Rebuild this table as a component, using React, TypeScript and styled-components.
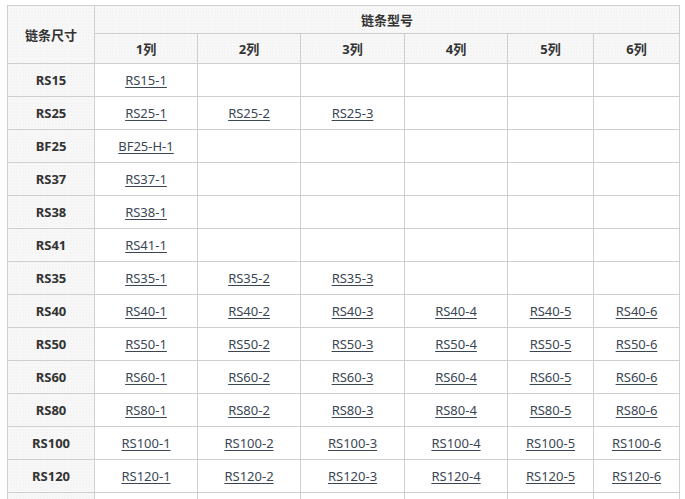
import React from "react";
import styled, { createGlobalStyle } from "styled-components";

const Global = createGlobalStyle`
  html, body { margin: 0; padding: 0; background: #fff; }
  body { font-family: "Noto Sans", "Noto Sans CJK SC", sans-serif; color: #333; }
`;

const Page = styled.div`
  padding: 5px 0 0 7px;
  height: 499px;
  overflow: hidden;
  box-sizing: border-box;
`;

const Table = styled.table`
  border-collapse: collapse;
  table-layout: fixed;
  width: 673px;
  font-size: 13px;
`;

const Col = styled.col<{ $w: number }>`
  width: ${(p) => p.$w}px;
`;

const Th = styled.th<{ $h?: number }>`
  border: 1px solid #cfcfcf;
  height: ${(p) => p.$h ?? 32}px;
  padding: 0;
  box-sizing: border-box;
  font-weight: bold;
  font-size: 13px;
  color: #333;
  text-align: center;
  vertical-align: middle;
  background-color: #e6e6e6;
  background-image: linear-gradient(90deg, #f8f8f8 2px, transparent 2px),
    linear-gradient(#f8f8f8 2px, #e6e6e6 2px);
  background-size: 3px 3px;
`;

const Td = styled.td`
  border: 1px solid #cfcfcf;
  height: 33px;
  padding: 0;
  box-sizing: border-box;
  text-align: center;
  vertical-align: middle;
  background: #fff;
`;

const Link = styled.a`
  color: #3a4654;
  text-decoration: underline;
  text-underline-offset: 2px;
  font-size: 13px;
`;

const widths = [87, 103, 103, 104, 103, 86, 86];

type Row = { name: string; links: string[] };

const full = (n: string) => [1, 2, 3, 4, 5, 6].map((i) => `${n}-${i}`);

const rows: Row[] = [
  { name: "RS15", links: ["RS15-1"] },
  { name: "RS25", links: ["RS25-1", "RS25-2", "RS25-3"] },
  { name: "BF25", links: ["BF25-H-1"] },
  { name: "RS37", links: ["RS37-1"] },
  { name: "RS38", links: ["RS38-1"] },
  { name: "RS41", links: ["RS41-1"] },
  { name: "RS35", links: ["RS35-1", "RS35-2", "RS35-3"] },
  { name: "RS40", links: full("RS40") },
  { name: "RS50", links: full("RS50") },
  { name: "RS60", links: full("RS60") },
  { name: "RS80", links: full("RS80") },
  { name: "RS100", links: full("RS100") },
  { name: "RS120", links: full("RS120") },
  { name: "", links: [] },
];

export default function App() {
  return (
    <>
      <Global />
      <Page>
        <Table>
          <colgroup>
            {widths.map((w, i) => (
              <Col key={i} $w={w} />
            ))}
          </colgroup>
          <thead>
            <tr>
              <Th rowSpan={2} $h={58}>链条尺寸</Th>
              <Th colSpan={6} $h={28}>链条型号</Th>
            </tr>
            <tr>
              {[1, 2, 3, 4, 5, 6].map((i) => (
                <Th key={i} $h={30}>{i}列</Th>
              ))}
            </tr>
          </thead>
          <tbody>
            {rows.map((r, ri) => (
              <tr key={ri}>
                <Th as="td" $h={33}>{r.name}</Th>
                {[0, 1, 2, 3, 4, 5].map((i) => (
                  <Td key={i}>
                    {r.links[i] ? <Link href="#">{r.links[i]}</Link> : null}
                  </Td>
                ))}
              </tr>
            ))}
          </tbody>
        </Table>
      </Page>
    </>
  );
}
